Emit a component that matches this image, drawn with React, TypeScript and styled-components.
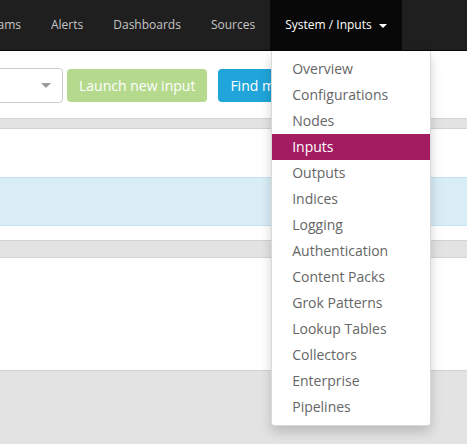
import { createGlobalStyle, styled } from "styled-components";

const GlobalStyle = createGlobalStyle`
  html, body {
    margin: 0;
    padding: 0;
    background: #e3e3e3;
    font-family: "Open Sans", "DejaVu Sans", sans-serif;
    font-size: 14px;
    overflow: hidden;
  }
`;

const navItems = ["Streams", "Alerts", "Dashboards", "Sources"];

const systemItems = [
  "Overview",
  "Configurations",
  "Nodes",
  "Inputs",
  "Outputs",
  "Indices",
  "Logging",
  "Authentication",
  "Content Packs",
  "Grok Patterns",
  "Lookup Tables",
  "Collectors",
  "Enterprise",
  "Pipelines",
];

const Page = styled.div`
  position: relative;
  width: 467px;
  height: 444px;
  overflow: hidden;
  background: #e3e3e3;
`;

const Navbar = styled.nav`
  display: flex;
  height: 50px;
  background: #1f1f1f;
  border-bottom: 1px solid #080808;
`;

const NavList = styled.ul`
  display: flex;
  margin: 0 0 0 -40px;
  padding: 0;
  list-style: none;
`;

const NavItem = styled.li<{ $active?: boolean }>`
  position: relative;
  display: flex;
  align-items: center;
  padding: 0 15px;
  height: 50px;
  line-height: 20px;
  font-size: 12px;
  white-space: nowrap;
  color: ${(p) => (p.$active ? "#ffffff" : "#c6c6c6")};
  background: ${(p) => (p.$active ? "#080808" : "transparent")};
`;

const Caret = styled.span`
  display: inline-block;
  width: 0;
  height: 0;
  margin-left: 7px;
  margin-top: 2px;
  border-top: 4px solid currentColor;
  border-left: 4px solid transparent;
  border-right: 4px solid transparent;
`;

const Dropdown = styled.ul`
  position: absolute;
  top: 51px;
  left: 1px;
  z-index: 10;
  width: 158px;
  margin: 0;
  padding: 5px 0;
  list-style: none;
  font-size: 14px;
  background: #ffffff;
  border: 1px solid rgba(0, 0, 0, 0.15);
  border-top: none;
  border-radius: 0 0 4px 4px;
  box-shadow: 0 6px 12px rgba(0, 0, 0, 0.175);
`;

const DropdownItem = styled.li<{ $active?: boolean }>`
  height: 26px;
  line-height: 26px;
  padding: 0 20px;
  color: ${(p) => (p.$active ? "#ffffff" : "#666666")};
  background: ${(p) => (p.$active ? "#a31c62" : "transparent")};
`;

const Section = styled.section<{ $height: number; $gap: number }>`
  height: ${(p) => p.$height}px;
  background: #ffffff;
  border-top: 1px solid #d2d2d2;
  border-bottom: 1px solid #d2d2d2;
  margin-bottom: ${(p) => p.$gap}px;
  display: flex;
  flex-direction: column;
`;

const TopSection = styled(Section)`
  border-top: none;
  padding-top: 17px;
  box-sizing: border-box;
`;

const Toolbar = styled.div`
  display: flex;
  align-items: center;
  margin-left: -40px;
`;

const SelectBox = styled.div`
  box-sizing: border-box;
  display: flex;
  align-items: center;
  justify-content: flex-end;
  width: 103px;
  height: 35px;
  padding-right: 11px;
  border: 1px solid #cccccc;
  border-radius: 4px;
  background: #ffffff;
`;

const SelectArrow = styled.span`
  width: 0;
  height: 0;
  border-top: 5px solid #999999;
  border-left: 5px solid transparent;
  border-right: 5px solid transparent;
`;

const Button = styled.button<{ $color: string }>`
  box-sizing: border-box;
  height: 33px;
  padding: 0 12px;
  margin-left: 4px;
  border: none;
  border-radius: 4px;
  background: ${(p) => p.$color};
  color: #ffffff;
  font-family: inherit;
  font-size: 14px;
  white-space: nowrap;
  & + & {
    margin-left: 11px;
  }
`;

const InfoRow = styled.div`
  margin-top: 48px;
  height: 47px;
  background: #d9edf7;
  border-top: 1px solid #c4e3f0;
  border-bottom: 1px solid #c4e3f0;
`;

export default function App() {
  return (
    <Page>
      <GlobalStyle />
      <Navbar>
        <NavList>
          {navItems.map((item) => (
            <NavItem key={item}>{item}</NavItem>
          ))}
          <NavItem $active>
            System / Inputs
            <Caret />
            <Dropdown>
              {systemItems.map((item) => (
                <DropdownItem key={item} $active={item === "Inputs"}>
                  {item}
                </DropdownItem>
              ))}
            </Dropdown>
          </NavItem>
        </NavList>
      </Navbar>
      <TopSection $height={68} $gap={9}>
        <Toolbar>
          <SelectBox>
            <SelectArrow />
          </SelectBox>
          <Button $color="#b5d98d">Launch new input</Button>
          <Button $color="#1fa5da">Find more inputs</Button>
        </Toolbar>
      </TopSection>
      <Section $height={111} $gap={16}>
        <InfoRow />
      </Section>
      <Section $height={112} $gap={0} />
    </Page>
  );
}
